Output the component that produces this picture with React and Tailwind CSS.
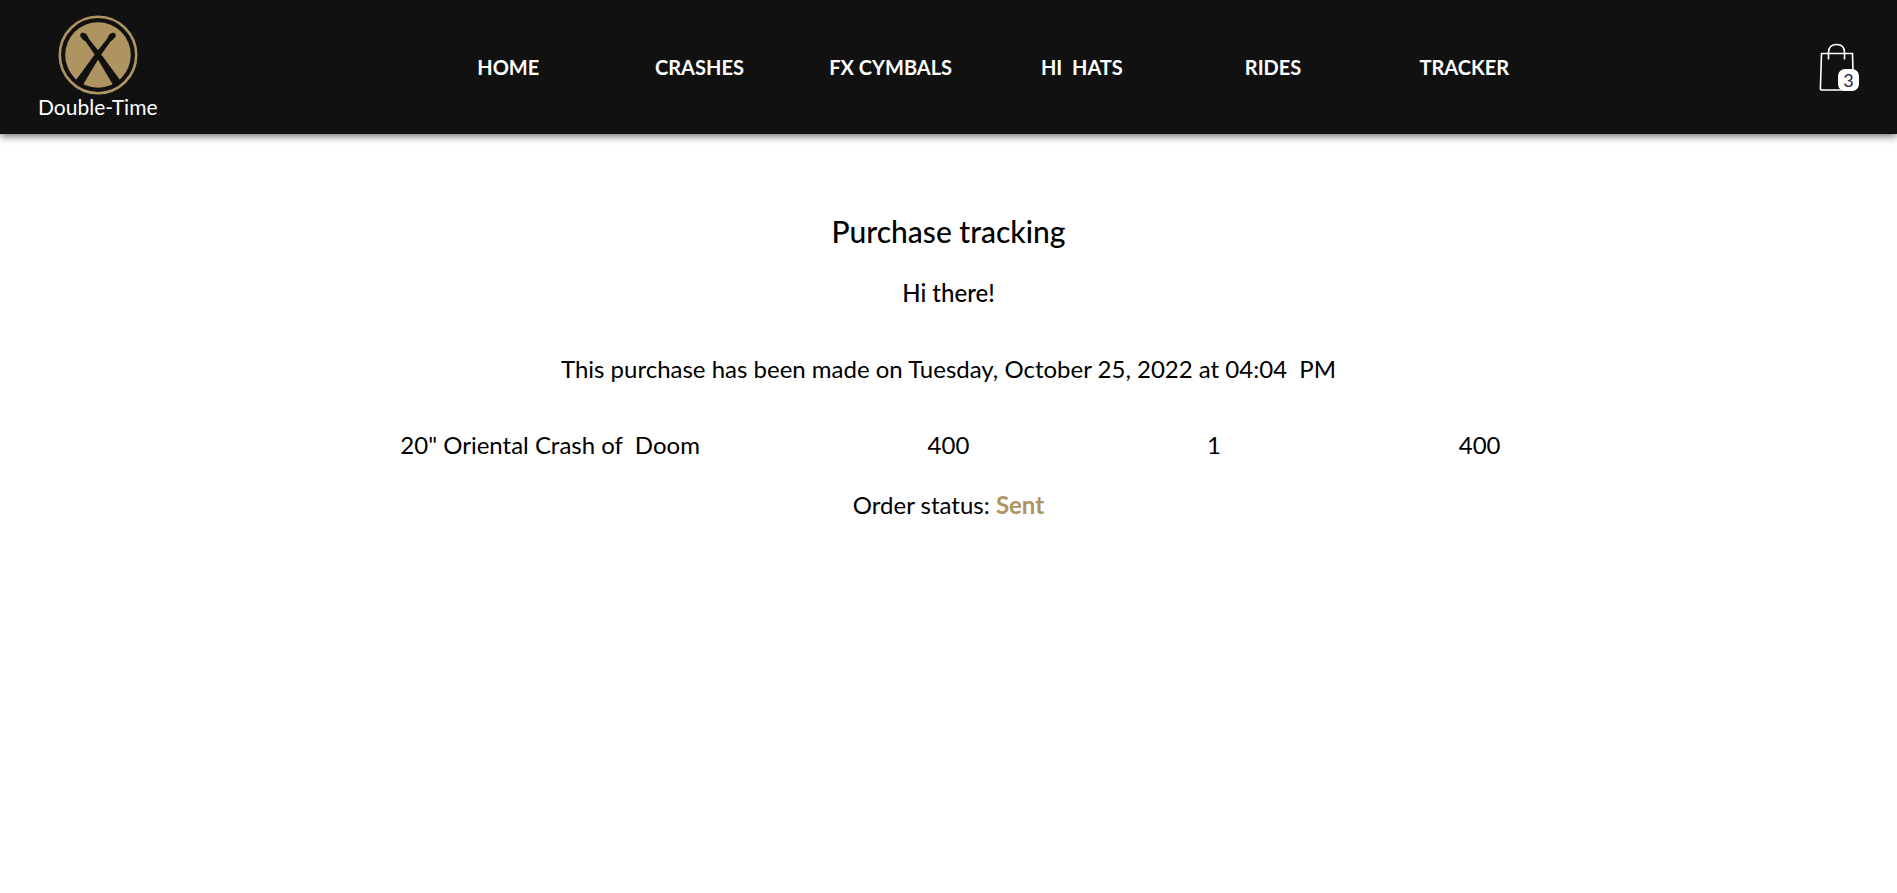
import React from "react";

const links = ["HOME", "CRASHES", "FX CYMBALS", "HI  HATS", "RIDES", "TRACKER"];

const items = [
  { name: '20" Oriental Crash of  Doom', price: 400, quantity: 1 },
];

function Logo() {
  return (
    <svg viewBox="0 0 80 80" className="size-20" aria-hidden="true">
      <circle cx="40" cy="40" r="38.2" fill="none" stroke="#ae9460" strokeWidth="2.6" />
      <circle cx="40" cy="40" r="32.8" fill="#ae9460" />
      <g fill="#111">
        <path d="M22.8 18.4c1.4-1.2 3.600-.8 5 .4 1.700 1.500 2.300 3.200 3 5L41.800 37.600 63.500 67 56 71.500 38.600 42.200 27.600 26.400c-1.800-.9-3.200-2-4.400-3.600-1-1.300-1.400-3.300-.4-4.400z" />
        <path d="M57.200 18.400c-1.400-1.200-3.600-.8-5 .4-1.700 1.500-2.300 3.200-3 5L38.200 37.600 16.500 67 24 71.500 41.400 42.200 52.400 26.400c1.800-.9 3.200-2 4.400-3.600 1-1.300 1.400-3.300.4-4.400z" />
      </g>
    </svg>
  );
}

function Bag() {
  return (
    <svg viewBox="0 0 40 48" className="h-12 w-10" fill="none" stroke="#fff" strokeWidth="1.600" aria-hidden="true">
      <path d="M2.500 10.500H33.500L34.500 45.500Q34.600 47 33 47H3Q1.300 47 1.400 45.500Z" />
      <path d="M9.500 16.500V9.500C9.500 4 13 1.500 17.500 1.500S25.500 4 25.500 9.500V16.500" />
    </svg>
  );
}

export default function App() {
  return (
    <div className="min-h-screen bg-white font-['Lato','Open_Sans',sans-serif] text-2xl text-black">
      <header className="flex h-[134px] items-center justify-between bg-[#111] px-[38px] text-white shadow-[0_2px_8px_rgba(0,0,0,0.6)]">
        <a href="#home" className="flex flex-col items-center">
          <Logo />
          <span className="text-[21px] leading-6">Double-Time</span>
        </a>
        <nav className="mr-1 w-[63%]">
          <ul className="grid grid-cols-6 text-center text-xl leading-7 font-bold">
            {links.map((label) => (
              <li key={label}>
                <a href="#shop" className="whitespace-pre">{label}</a>
              </li>
            ))}
          </ul>
        </nav>
        <button type="button" aria-label="Shopping bag" className="relative">
          <Bag />
          <span className="absolute right-0 bottom-0 flex h-[22px] w-[21px] items-center justify-center rounded-[7px] bg-white text-lg text-[#24205a]">
            3
          </span>
        </button>
      </header>

      <main className="flex flex-col items-center pt-[77px]">
        <h1 className="text-[30px] leading-10 font-medium">Purchase tracking</h1>
        <h2 className="mt-6 leading-9 font-medium">Hi there!</h2>
        <p className="mt-10 leading-9 whitespace-pre">
          This purchase has been made on Tuesday, October 25, 2022 at 04:04  PM
        </p>
        <table className="mt-10 w-[70%] table-fixed text-center leading-9">
          <colgroup>
            <col className="w-2/5" />
            <col className="w-1/5" />
            <col className="w-1/5" />
            <col className="w-1/5" />
          </colgroup>
          <tbody>
            {items.map((item) => (
              <tr key={item.name}>
                <td className="whitespace-pre">{item.name}</td>
                <td>{item.price}</td>
                <td>{item.quantity}</td>
                <td>{item.price * item.quantity}</td>
              </tr>
            ))}
          </tbody>
        </table>
        <p className="mt-6 leading-9">
          Order status: <strong className="font-bold text-[#ae9460]">Sent</strong>
        </p>
      </main>
    </div>
  );
}
